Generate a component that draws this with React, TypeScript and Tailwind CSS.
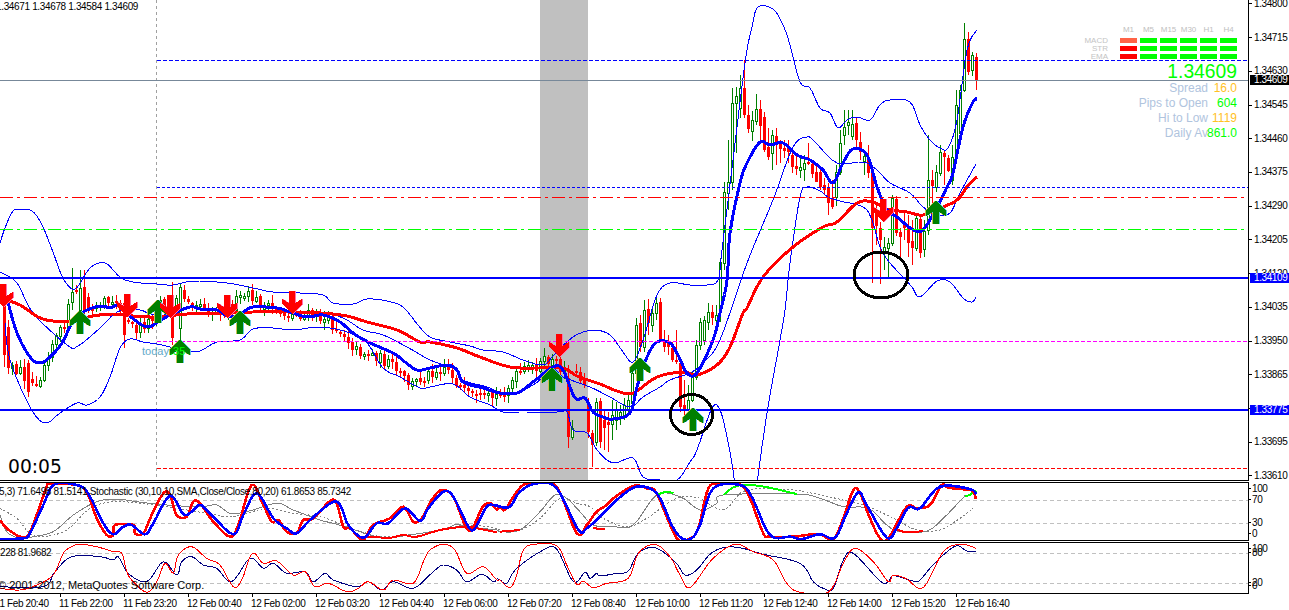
const zp = (x0: number, y0: number, a: number[]) => {
  const out: string[] = [];
  for (let i = 0; i < a.length; i += 2) out.push(`${(x0 + a[i] / 3).toFixed(1)},${(y0 + a[i + 1] / 3).toFixed(1)}`);
  return out.join(' ');
};
const raw = (a: number[]) => zp(0, 0, a.map((v) => v * 3));

// Catmull-Rom resampling so that the hand-read curves come out rounded
const smooth = (pts: string) => {
  const p = pts.split(' ').map((s) => s.split(',').map(Number));
  const out: string[] = [];
  for (let i = 0; i < p.length - 1; i++) {
    const a = p[Math.max(0, i - 1)];
    const b = p[i];
    const c = p[i + 1];
    const d = p[Math.min(p.length - 1, i + 2)];
    for (let k = 0; k < 5; k++) {
      const t = k / 5;
      const t2 = t * t;
      const t3 = t2 * t;
      const f = (n: number) =>
        0.5 * (2 * b[n] + (c[n] - a[n]) * t + (2 * a[n] - 5 * b[n] + 4 * c[n] - d[n]) * t2 + (3 * b[n] - a[n] - 3 * c[n] + d[n]) * t3);
      out.push(`${f(0).toFixed(1)},${f(1).toFixed(1)}`);
    }
  }
  out.push(p[p.length - 1].join(','));
  return out.join(' ');
};

// ---- main pane curves (reference pixels)
const upper = raw([0,243,5,228,13,211,20,210,32,211,42,225,53,252,63,278,75,289,90,268,105,263,120,277,133,282,157,284,173,285,193,281,227,283,253,288,273,292,300,293,323,295,333,303,353,304,367,299,387,301,403,307,418,325,430,337,450,342,470,346,483,350,503,352,523,360,543,365,553,356,573,337,593,330,610,335,623,352,633,362,643,340,657,295,670,283,690,285,707,285,718,280,722,250,733,160,745,63,752,27,758,7,773,9,783,25,790,45,800,82,810,88,820,108,830,113,838,128,847,120,857,117,870,120,880,105,890,100,910,102,920,125,930,140,940,148,948,148,957,120,967,50,977,30]);
const lower = raw([5,323,10,360,30,407,45,423,60,413,77,403,87,405,100,397,110,377,120,348,130,339,143,342,157,344,170,347,187,351,200,351,217,342,240,340,253,329,273,328,293,330,320,327,347,332,367,343,383,368,400,377,420,388,430,387,453,384,470,397,490,405,503,412,520,412,557,412,567,412,573,430,587,433,597,450,613,463,633,458,643,477,660,480,677,480,690,462,697,450,712,408,720,410,727,437,733,470,735,490]);
const lower2 = raw([756,490,767,413,780,340,785,310,790,263,800,197,807,187,820,191,828,197,840,201,863,207,872,220,880,247,890,263,903,277,912,287,920,297,937,281,950,282,963,298,972,302,976,297]);
const mid = raw([0,272,17,283,33,313,67,345,78,346,100,328,113,315,123,310,140,310,157,315,200,313,257,312,317,312,343,318,363,330,383,335,407,347,430,360,450,367,457,370,463,380,487,387,510,395,533,385,553,370,563,377,590,387,610,397,630,407,643,397,660,387,670,380,690,373,703,363,720,340,747,263,773,200,793,147,807,137,815,142,837,163,863,162,877,170,890,183,910,193,923,207,937,215,950,213,960,193,976,164]);
const blueMA = raw([0,287,7,300,17,333,30,357,40,363,50,357,62,343,72,323,83,312,100,306,110,308,118,306,132,318,147,327,158,322,170,315,190,307,200,309,217,310,230,317,243,312,253,307,277,308,290,312,307,317,323,315,340,322,353,333,370,343,393,353,405,362,417,370,430,368,447,365,457,370,463,382,483,388,500,393,517,393,533,382,553,367,563,370,575,398,585,398,593,412,603,417,613,419,630,413,637,387,647,357,657,342,670,343,678,355,687,373,697,373,713,340,720,313,727,280,730,233,740,183,747,163,760,142,770,145,783,143,797,155,810,160,823,170,833,183,843,163,853,149,867,155,877,187,887,210,897,217,912,229,923,230,937,207,947,187,953,173,963,127,973,102,977,99]);
const redMA = raw([0,298,20,305,38,317,53,321,70,321,93,316,113,314,133,316,157,317,187,314,220,313,253,312,287,312,320,313,347,316,367,322,397,330,420,342,430,342,457,348,480,357,510,367,540,368,563,368,577,376,600,384,617,391,633,393,657,377,683,372,697,375,717,365,730,347,743,313,747,308,763,277,793,247,823,227,837,222,857,203,873,202,887,209,907,212,923,215,943,207,957,200,967,187,977,177]);

// ---- candles: [x, bodyTop, bodyBottom, high, low, bull]
type C = [number, number, number, number, number, number];
const explicit: C[] = [
  [4,288,355,285,367,0],[28,363,392,360,397,0],[72,292,302,268,310,1],[80,288,310,270,312,1],[84,287,310,270,320,0],[124,303,335,298,348,0],[172,300,338,282,345,0],[180,287,328,283,340,1],
  [568,378,437,365,448,0],[572,428,437,420,440,1],[588,403,432,398,438,0],[592,433,445,430,467,0],[596,402,442,398,446,1],[600,401,442,398,448,0],[604,420,428,410,450,0],[608,422,425,412,452,0],[612,415,424,400,440,1],[616,410,420,402,430,1],[620,412,418,405,425,1],[624,405,415,398,420,1],[628,400,410,393,416,1],
  [632,373,403,368,408,1],[636,325,373,318,380,1],[640,323,347,315,352,0],[644,310,347,300,352,1],[648,309,323,299,335,0],[652,313,325,308,332,1],[656,303,313,295,320,1],[660,302,340,298,342,0],[664,340,347,330,352,0],[668,343,347,335,355,0],[672,348,360,342,362,0],[676,360,362,330,364,0],[680,363,407,360,412,0],[684,405,409,380,415,0],[688,400,410,385,418,1],[692,377,400,372,402,1],[696,345,377,340,380,1],[700,322,345,318,350,1],[704,320,340,316,345,1],[708,312,322,303,330,1],[712,312,318,305,325,0],[716,315,320,305,325,1],
  [720,262,310,258,322,1],[724,192,263,182,270,1],[728,182,193,140,210,1],[732,103,182,88,190,1],[736,96,103,87,153,1],[740,88,108,75,118,1],[744,88,115,60,118,0],[748,115,129,105,133,0],[752,120,131,111,141,1],[756,109,121,94,125,1],[760,109,126,100,140,0],[764,117,150,112,152,0],[768,147,157,128,160,0],[772,135,153,130,170,1],[776,136,145,128,165,0],[780,142,149,140,163,0],[784,148,151,140,158,0],[788,148,152,140,163,0],[792,155,167,150,173,0],[796,166,169,155,175,0],[800,167,170,155,178,1],[804,163,169,155,181,1],[808,162,164,143,165,0],[812,164,174,160,178,0],[816,172,182,165,181,0],[820,172,187,168,190,0],[824,185,190,178,195,0],[828,187,203,183,215,0],[832,198,207,180,209,0],[836,172,197,165,206,1],[840,143,172,130,175,1],[844,127,135,110,145,1],[848,122,125,110,135,1],[852,124,136,110,140,1],[856,123,140,118,150,0],[860,142,152,132,160,0],[864,156,161,150,175,1],[868,157,173,145,178,0],[872,173,228,170,283,0],[876,210,226,205,245,0],[880,228,240,222,284,0],[884,247,253,237,270,1],[888,243,248,238,279,1],[892,198,243,195,246,1],[896,199,233,196,236,0],[900,232,237,228,258,0],[904,222,228,212,240,0],[908,227,243,215,257,0],[912,241,248,220,265,0],[916,218,248,215,251,1],[920,219,253,215,258,0],[924,231,249,220,257,1],[928,180,230,135,235,1],[932,180,186,170,210,0],[936,172,187,165,192,1],[940,152,173,145,176,1],[944,153,157,150,185,0],[948,158,171,155,172,0],[952,157,180,145,185,1],[956,105,157,90,160,1],[960,90,133,85,136,1],[964,39,90,23,92,1],[968,39,72,32,75,0],[972,55,70,52,76,1],[976,57,80,53,90,0],
];
const pathPts = [0,300,8,365,20,370,30,385,40,375,50,345,62,330,72,295,80,295,90,305,105,300,118,300,125,320,135,330,150,320,160,300,172,310,180,295,195,300,210,310,225,310,245,295,255,300,270,310,290,315,310,315,325,320,345,335,355,350,375,355,390,365,410,385,425,375,445,365,465,395,480,400,500,395,520,372,550,360,565,370,628,405];
const pathY = (x: number) => {
  for (let i = 0; i < pathPts.length - 2; i += 2) {
    if (x <= pathPts[i + 2]) {
      const t = (x - pathPts[i]) / (pathPts[i + 2] - pathPts[i]);
      return pathPts[i + 1] + t * (pathPts[i + 3] - pathPts[i + 1]);
    }
  }
  return pathPts[pathPts.length - 1];
};
let seed = 12345;
const rnd = () => {
  seed = (seed * 16807) % 2147483647;
  return seed / 2147483647;
};
const candles: C[] = (() => {
  const have = new Set(explicit.map((c) => c[0]));
  const out: C[] = [...explicit];
  let prev = 300;
  for (let x = 0; x < 632; x += 4) {
    const close = pathY(x) + (rnd() - 0.5) * 12;
    const open = prev + (rnd() - 0.5) * 2;
    prev = close;
    if (have.has(x)) continue;
    const top = Math.min(open, close);
    const bot = Math.max(open, close);
    const bt = Math.round(top);
    const bb = Math.max(Math.round(bot), bt + 2);
    out.push([x, bt, bb, bt - Math.round(1 + rnd() * 7), bb + Math.round(1 + rnd() * 7), close < open ? 1 : 0]);
  }
  return out;
})();

// ---- oscillators (zoom crop coordinates)
const S1 = [0,135,20,160,60,185,85,180,110,120,140,35,150,27,230,30,262,55,290,130,320,180,340,180,345,150,400,150,405,175,430,175,455,120,490,55,510,60,530,120,560,125,580,80,600,85,640,140,690,185,715,150,755,30,790,90,815,140,835,135,860,170,890,175,910,135,940,130,990,78,1010,85,1030,155,1050,160,1080,190,1095,190,1120,150,1170,130,1210,95,1240,140,1265,130,1295,75,1325,45,1360,65,1395,150,1415,165,1445,100,1470,85,1490,103];
const S1b = [0,95,15,105,40,65,70,30,110,25,170,35,230,175,260,150,290,110,320,90,340,70,400,33,440,40,470,55,530,190,570,190,595,160,625,40,660,28,720,28,750,70,790,175,810,185,880,185,920,180,960,178,1000,192,1030,130,1060,45,1080,55,1110,130,1140,190,1165,190,1220,95,1250,100,1290,90,1325,30,1345,38,1410,45,1420,50,1428,72];
const S2 = [0,192,70,190,90,175,130,90,165,27,240,33,270,65,310,145,340,178,370,155,395,150,435,178,460,145,510,62,550,118,575,110,600,90,630,115,700,178,730,120,770,55,820,130,860,160,890,175,930,135,1000,80,1025,100,1045,150,1090,188,1130,145,1165,145,1215,100,1260,138,1285,100,1330,50,1360,65,1405,155,1425,160,1460,95,1490,92];
const S2b = [0,95,30,95,60,50,110,25,170,40,235,165,260,160,300,125,350,75,410,35,470,55,515,150,545,190,575,190,600,150,640,40,720,30,755,65,810,180,870,185,905,192,960,178,1005,188,1040,115,1075,52,1100,90,1160,188,1190,160,1225,98,1260,100,1320,35,1410,42,1428,58];
const G1 = [0,120,20,170,60,190,100,185,160,170,220,120,290,80,350,72,410,80,500,90,600,95,650,90,690,115,740,110,830,85,880,105,960,135,1000,145,1050,160,1110,180,1165,188,1320,165,1370,148,1400,155,1490,165];
const G1b = [0,170,60,165,120,110,165,60,200,70,240,110,280,150,340,155,400,150,470,60,540,65,600,105,650,85,670,60,890,57,960,70,1030,95,1105,100,1160,150,1200,170,1280,168,1330,130,1395,62];
const G2 = [0,100,50,130,90,175,130,185,200,165,270,100,340,80,420,85,500,95,620,115,700,125,800,100,880,115,960,125,1030,150,1100,175,1165,185,1300,170,1400,150,1490,160];
const G2b = [0,165,60,165,120,130,180,70,230,85,270,95,310,130,380,155,440,130,530,70,600,70,640,95,680,100,740,45,880,45,960,60,1030,75,1105,95,1180,130,1250,165,1320,165,1380,130,1420,100];
const R1 = [1100,185,1170,188,1210,180,1250,185,1320,165,1395,155,1430,160,1490,172];
const R2 = [0,170,60,165];
const Y1 = [0,340,60,345,110,330,160,300,190,235,215,215,240,208,290,215,340,230,365,235,380,290,400,320,440,352,470,320,495,265,520,295,535,240,575,215,620,250,660,270,700,335,725,315,757,235,790,265,830,258,880,300,915,290,945,335,985,325,1040,350,1075,340,1105,320,1150,345,1180,315,1240,325,1270,260,1290,225,1330,208,1365,225,1400,295,1450,275,1490,315];
const Y1b = [0,315,30,338,50,300,70,225,105,208,170,212,200,270,230,328,250,318,280,338,320,325,385,310,415,235,465,208,510,245,540,300,570,338,630,260,680,218,715,208,760,230,820,255,860,325,900,352,985,352,1030,265,1065,220,1120,260,1165,320,1180,300,1220,312,1270,338,1330,230,1385,208,1428,220];
const N1 = [0,335,130,335,165,290,215,245,300,245,340,255,355,245,385,295,440,320,490,260,530,300,545,260,575,245,610,270,650,280,695,320,750,250,790,280,820,265,860,295,915,290,940,320,975,295,1000,315,1070,335,1105,320,1145,345,1180,320,1240,340,1300,290,1330,270,1370,285,1400,320,1445,298,1480,320,1490,312];
const N1b = [0,315,20,325,50,280,130,225,170,222,220,320,255,292,270,310,290,295,300,303,350,295,385,288,415,235,465,218,525,260,555,300,590,285,630,238,670,218,720,218,790,238,900,265,940,320,975,342,1000,340,1030,255,1060,235,1140,318,1165,320,1180,302,1240,318,1260,315,1290,280,1330,240,1370,212,1400,228,1428,228];
const joined = (a: number[], b: number[]) => `${zp(0, 475, a)} ${zp(500, 475, b)}`;

const ups: [number, number][] = [[80,323],[158,312],[180,352],[240,323],[552,380],[640,370],[693,420],[936,213]];
const downs: [number, number][] = [[3,300],[127,310],[170,311],[227,311],[292,307],[559,350],[883,215]];
const UP = '0,-13 10,-2 10,3 3,-1 3,11 -3,11 -3,-1 -10,3 -10,-2';
const DOWN = '-3,-16 3,-16 3,-4 10,-8 10,-3 0,7 -10,-3 -10,-8 -3,-4';

const hLines: [number, number, string, string, number][] = [
  [60.5, 157, '#0000ff', '4 2', 1],
  [80.5, 0, '#778899', '', 1],
  [187.5, 157, '#0000ff', '3 2', 1],
  [197.5, 0, '#ff0000', '13 4 3 4', 1],
  [229.5, 0, '#00ff00', '13 4 3 4', 1],
  [278, 0, '#0000ff', '', 2],
  [341.5, 157, '#ff00ff', '4 2', 1],
  [410, 0, '#0000ff', '', 2],
  [468.5, 157, '#ff0000', '4 2', 1],
];

const prices = ['1.34800','1.34715','1.34630','1.34545','1.34460','1.34375','1.34290','1.34205','1.34120','1.34035','1.33950','1.33865','','1.33695','1.33610'];
const times = ['11 Feb 20:40','11 Feb 22:00','11 Feb 23:20','12 Feb 00:40','12 Feb 02:00','12 Feb 03:20','12 Feb 04:40','12 Feb 06:00','12 Feb 07:20','12 Feb 08:40','12 Feb 10:00','12 Feb 11:20','12 Feb 12:40','12 Feb 14:00','12 Feb 15:20','12 Feb 16:40'];
const frames = ['M1','M5','M15','M30','H1','H4'];
const signals = [
  { name: 'MACD', first: 'bg-[#ff6347]' },
  { name: 'STR', first: 'bg-[#ff0000]' },
  { name: 'EMA', first: 'bg-[#ff0000]' },
];
const stats = [
  { label: 'Spread', value: '16.0', color: 'text-[#ffc125]' },
  { label: 'Pips to Open', value: '604', color: 'text-[#00ff00]' },
  { label: 'Hi to Low', value: '1119', color: 'text-[#ffc125]' },
  { label: 'Daily Av', value: '861.0', color: 'text-[#00ff00]' },
];

function Line({ pts, color, w = 1, dash }: { pts: string; color: string; w?: number; dash?: string }) {
  return <polyline points={smooth(pts)} fill="none" stroke={color} strokeWidth={w} strokeDasharray={dash} strokeLinejoin="round" />;
}

function PriceTag({ top, bg, text }: { top: string; bg: string; text: string }) {
  return (
    <div className={`absolute left-[1px] right-0 h-[10px] flex items-center pl-[4px] text-white text-[10px] tracking-[-0.4px] leading-none ${top} ${bg}`}>{text}</div>
  );
}

function MainChart() {
  return (
    <svg width={1248} height={480} viewBox="0 0 1248 480" className="block [shape-rendering:crispEdges]">
      <rect x={540} y={0} width={48} height={480} fill="#c0c0c0" />
      <line x1={156.5} y1={0} x2={156.5} y2={480} stroke="#a0a0a0" strokeDasharray="3 3" />
      {candles.map(([x, t, b, h, l, bull], i) => {
        const c = bull ? '#008000' : '#ff0000';
        return (
          <g key={i}>
            <line x1={x + 0.5} x2={x + 0.5} y1={h} y2={l} stroke={c} />
            {bull ? (
              <rect x={x - 0.5} y={t + 0.5} width={2} height={b - t} fill="#ffffff" stroke={c} />
            ) : (
              <rect x={x - 1} y={t} width={3} height={b - t} fill={c} />
            )}
          </g>
        );
      })}
      <Line pts={upper} color="#0000ff" />
      <Line pts={lower} color="#0000ff" />
      <Line pts={lower2} color="#0000ff" />
      <Line pts={mid} color="#0000ff" />
      <Line pts={redMA} color="#ff0000" w={3} />
      <Line pts={blueMA} color="#0000ff" w={3} />
      {hLines.map(([y, x, c, d, w], i) => (
        <line key={i} x1={x} x2={1248} y1={y} y2={y} stroke={c} strokeDasharray={d || undefined} strokeWidth={w} />
      ))}
      {ups.map(([x, y], i) => (
        <g key={i}>
          <polygon transform={`translate(${x - 1} ${y})`} fill="#c8c050" points={UP} />
          <polygon transform={`translate(${x + 1} ${y})`} fill="#60c8e0" points={UP} />
          <polygon transform={`translate(${x} ${y})`} fill="#008000" points={UP} />
        </g>
      ))}
      {downs.map(([x, y], i) => (
        <g key={i}>
          <polygon transform={`translate(${x + 1} ${y})`} fill="#ff70b0" points={DOWN} />
          <polygon transform={`translate(${x} ${y})`} fill="#ff0000" points={DOWN} />
        </g>
      ))}
      <ellipse cx={691.5} cy={414.5} rx={21} ry={20} fill="none" stroke="#000000" strokeWidth={3} />
      <ellipse cx={881} cy={275} rx={27} ry={23} fill="none" stroke="#000000" strokeWidth={3} />
    </svg>
  );
}

function StochChart() {
  return (
    <svg width={1248} height={57} viewBox="0 483 1248 57" className="block [shape-rendering:crispEdges]">
      <line x1={0} x2={1248} y1={500.5} y2={500.5} stroke="#c0c0c0" strokeDasharray="4 3" />
      <line x1={0} x2={1248} y1={523.5} y2={523.5} stroke="#c0c0c0" strokeDasharray="4 3" />
      <Line pts={joined(G2, G2b)} color="#808080" dash="2 2" />
      <Line pts={joined(G1, G1b)} color="#808080" />
      <Line pts={zp(0, 475, R1)} color="#ff0000" w={2} />
      <Line pts={zp(500, 475, R2)} color="#ff0000" w={2} />
      <Line pts={zp(500, 475, [280,160,315,162])} color="#ff0000" w={2} />
      <Line pts={zp(500, 475, [1180,160,1220,172,1270,168])} color="#ff0000" w={2} />
      <Line pts={zp(500, 475, [470,60,500,50,520,55])} color="#00ff00" w={2} />
      <Line pts={zp(500, 475, [670,60,710,33,780,33,890,57])} color="#00ff00" w={2} />
      <Line pts={zp(500, 475, [1395,62,1410,60,1420,48,1430,50])} color="#00ff00" w={2} />
      <Line pts={joined(S1, S1b)} color="#ff0000" w={2.6} />
      <Line pts={joined(S2, S2b)} color="#0000ff" w={2.6} />
    </svg>
  );
}

function ThirdChart() {
  return (
    <svg width={1248} height={50} viewBox="0 543 1248 50" className="block [shape-rendering:crispEdges]">
      <line x1={0} x2={1248} y1={553.5} y2={553.5} stroke="#c0c0c0" strokeDasharray="4 3" />
      <line x1={0} x2={1248} y1={583.5} y2={583.5} stroke="#c0c0c0" strokeDasharray="4 3" />
      <Line pts={joined(N1, N1b)} color="#000080" />
      <Line pts={joined(Y1, Y1b)} color="#ff0000" />
    </svg>
  );
}

function SmallAxis({ items, top, height }: { items: [string, number][]; top: number; height: number }) {
  return (
    <svg width={40} height={height} viewBox={`0 ${top} 40 ${height}`} className="block">
      {items.map(([t, y], i) => (
        <g key={i}>
          <line x1={0} x2={2} y1={y + 0.5} y2={y + 0.5} stroke="#000000" shapeRendering="crispEdges" />
          <text x={3} y={y + 3.5} fontSize={10} letterSpacing={-0.4} fill="#000000" fontFamily="'Liberation Sans', sans-serif">{t}</text>
        </g>
      ))}
    </svg>
  );
}

export default function App() {
  return (
    <div className="w-[1289px] h-[610px] flex flex-col overflow-hidden bg-white text-black [font-family:'Liberation_Sans',sans-serif]">
      {/* main pane */}
      <div className="flex h-[481px] shrink-0">
        <div className="relative w-[1249px] h-[481px] border-r border-b border-black overflow-hidden">
          <MainChart />
          <span className="absolute left-[-4px] top-[1px] text-[10px] tracking-[-0.35px] leading-[12px] whitespace-nowrap">1.34671 1.34678 1.34584 1.34609</span>
          <span className="absolute left-[8px] top-[456px] text-[18.7px] leading-[22px] [font-family:'DejaVu_Sans',sans-serif]">00:05</span>
          <span className="absolute left-[142px] top-[345px] text-[11px] leading-[13px] text-[#5fa9c9] whitespace-nowrap">today</span>
          <span className="absolute left-[170px] top-[345px] text-[11px] leading-[13px] text-[#00ff00] whitespace-nowrap">.35</span>
          {/* signal dashboard */}
          <div className="absolute left-[1084px] top-[25px] w-[153px] flex flex-col">
            <div className="flex gap-[3px] pl-[36px] h-[13px] items-start">
              {frames.map((f) => (
                <span key={f} className="w-[17px] text-center text-[8px] leading-[10px] text-[#c0c0c0]">{f}</span>
              ))}
            </div>
            {signals.map((s) => (
              <div key={s.name} className="flex items-start h-[8px]">
                <span className="w-[24px] text-right text-[8px] leading-[6px] text-[#c4c4c4]">{s.name}</span>
                <div className="flex gap-[3px] ml-[12px]">
                  <div className={`w-[17px] h-[5px] ${s.first}`} />
                  {frames.slice(1).map((f) => (
                    <div key={f} className="w-[17px] h-[5px] bg-[#00ff00]" />
                  ))}
                </div>
              </div>
            ))}
            <div className="text-right text-[19.3px] h-[19px] leading-[20px] text-[#00ff00] whitespace-nowrap">1.34609</div>
            {stats.map((s) => (
              <div key={s.label} className="flex justify-end h-[15px] text-[12px] leading-[15px] whitespace-nowrap">
                <span className="text-[#b0c4de]">{s.label}</span>
                <span className="w-[29px] flex justify-end">
                  <span className={`${s.color}`}>{s.value}</span>
                </span>
              </div>
            ))}
          </div>
        </div>
        <div className="relative flex-1 h-[481px] overflow-hidden">
          <div className="flex flex-col mt-[-13px]">
            {prices.map((p, i) => (
              <div key={i} className="flex items-center h-[33.73px] shrink-0">
                <div className="w-[3px] h-px bg-black" />
                <span className="ml-[2px] text-[10px] tracking-[-0.4px] leading-none">{p}</span>
              </div>
            ))}
          </div>
          <PriceTag top="top-[75px]" bg="bg-black" text="1.34609" />
          <PriceTag top="top-[273px]" bg="bg-[#0000ff]" text="1.34109" />
          <PriceTag top="top-[405px]" bg="bg-[#0000ff]" text="1.33775" />
        </div>
      </div>
      {/* stochastic pane */}
      <div className="flex h-[59px] mt-px shrink-0">
        <div className="relative w-[1249px] border-t border-b border-r border-black overflow-hidden">
          <StochChart />
          <span className="absolute left-[-1px] top-[3px] text-[10px] tracking-[-0.34px] leading-[12px] whitespace-nowrap">5,3) 71.6498 81.5141 Stochastic (30,10,10,SMA,Close/Close,80,20) 61.8653 85.7342</span>
        </div>
        <SmallAxis top={483} height={58} items={[['100', 489], ['70', 500], ['30', 523], ['0', 534]]} />
      </div>
      {/* third pane */}
      <div className="flex h-[52px] mt-px shrink-0">
        <div className="relative w-[1249px] border-t border-b border-r border-black overflow-hidden">
          <ThirdChart />
          <span className="absolute left-0 top-[4px] text-[10px] tracking-[-0.4px] leading-[12px] whitespace-nowrap">228 81.9682</span>
          <span className="absolute left-[-2px] top-[35px] text-[11px] leading-[14px] whitespace-nowrap">© 2001-2012, MetaQuotes Software Corp.</span>
        </div>
        <SmallAxis top={543} height={50} items={[['100', 549], ['80', 553], ['20', 583], ['0', 586]]} />
      </div>
      {/* time axis */}
      <div className="flex flex-1 ml-[-4px] overflow-hidden">
        {times.map((t) => (
          <div key={t} className="w-[64px] shrink-0 flex flex-col items-start">
            <div className="w-px h-[3px] bg-black" />
            <span className="ml-[-1px] mt-[1px] text-[10px] tracking-[-0.38px] leading-[12px] whitespace-nowrap">{t}</span>
          </div>
        ))}
      </div>
    </div>
  );
}
